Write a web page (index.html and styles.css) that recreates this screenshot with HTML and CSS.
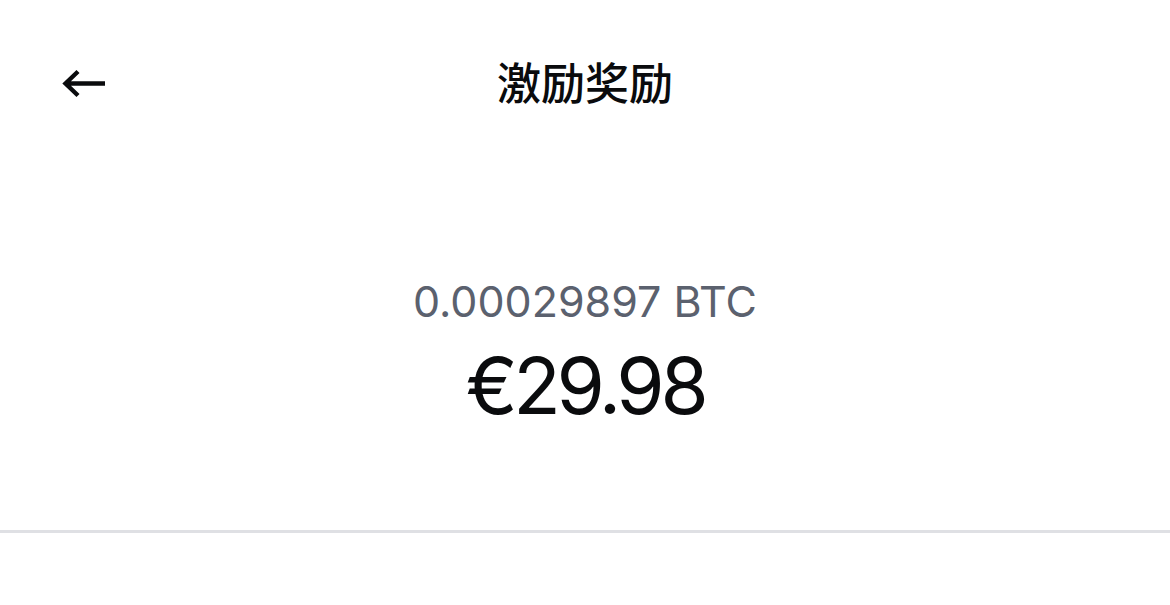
FILE: index.html
```html
<!DOCTYPE html>
<html lang="zh-CN">
<head>
  <meta charset="UTF-8" />
  <meta name="viewport" content="width=device-width, initial-scale=1.0"/>
  <title>激励奖励</title>
  <link rel="stylesheet" href="styles.css">
</head>
<body>
  <div class="header">
    <button class="back" aria-label="返回">
      <svg width="46" height="32" viewBox="0 0 46 32">
        <path d="M45 15.5 H6 M18 3.5 L5.5 15.5 L18 27.5" fill="none" stroke="#0a0b0d" stroke-width="4.4" />
      </svg>
    </button>
    <h1>激励奖励</h1>
  </div>

  <div class="amount">
    <div class="crypto">0.00029897 BTC</div>
    <div class="fiat">€29.98</div>
  </div>

  <hr class="divider">
</body>
</html>
```

FILE: styles.css
```css
body {
  margin: 0;
  background-color: #ffffff;
  color: #0a0b0d;
  font-family: Inter, "Noto Sans CJK SC", sans-serif;
}
.header {
  position: relative;
  height: 170px;
  display: flex;
  justify-content: center;
}
.back {
  position: absolute;
  left: 60px;
  top: 68px;
  padding: 0;
  border: none;
  background: none;
  line-height: 0;
}
h1 {
  margin: 0;
  padding-top: 56px;
  font-size: 44px;
  font-weight: 500;
  line-height: 56px;
}
.amount {
  text-align: center;
  padding-top: 103px;
}
.crypto {
  font-size: 43px;
  line-height: 56px;
  color: #5b616e;
}
.fiat {
  margin-top: 12px;
  font-size: 78px;
  line-height: 90px;
  letter-spacing: -4.3px;
}
.divider {
  margin: 99px 0 0;
  border: none;
  height: 3px;
  background-color: #dfe0e4;
}
```
